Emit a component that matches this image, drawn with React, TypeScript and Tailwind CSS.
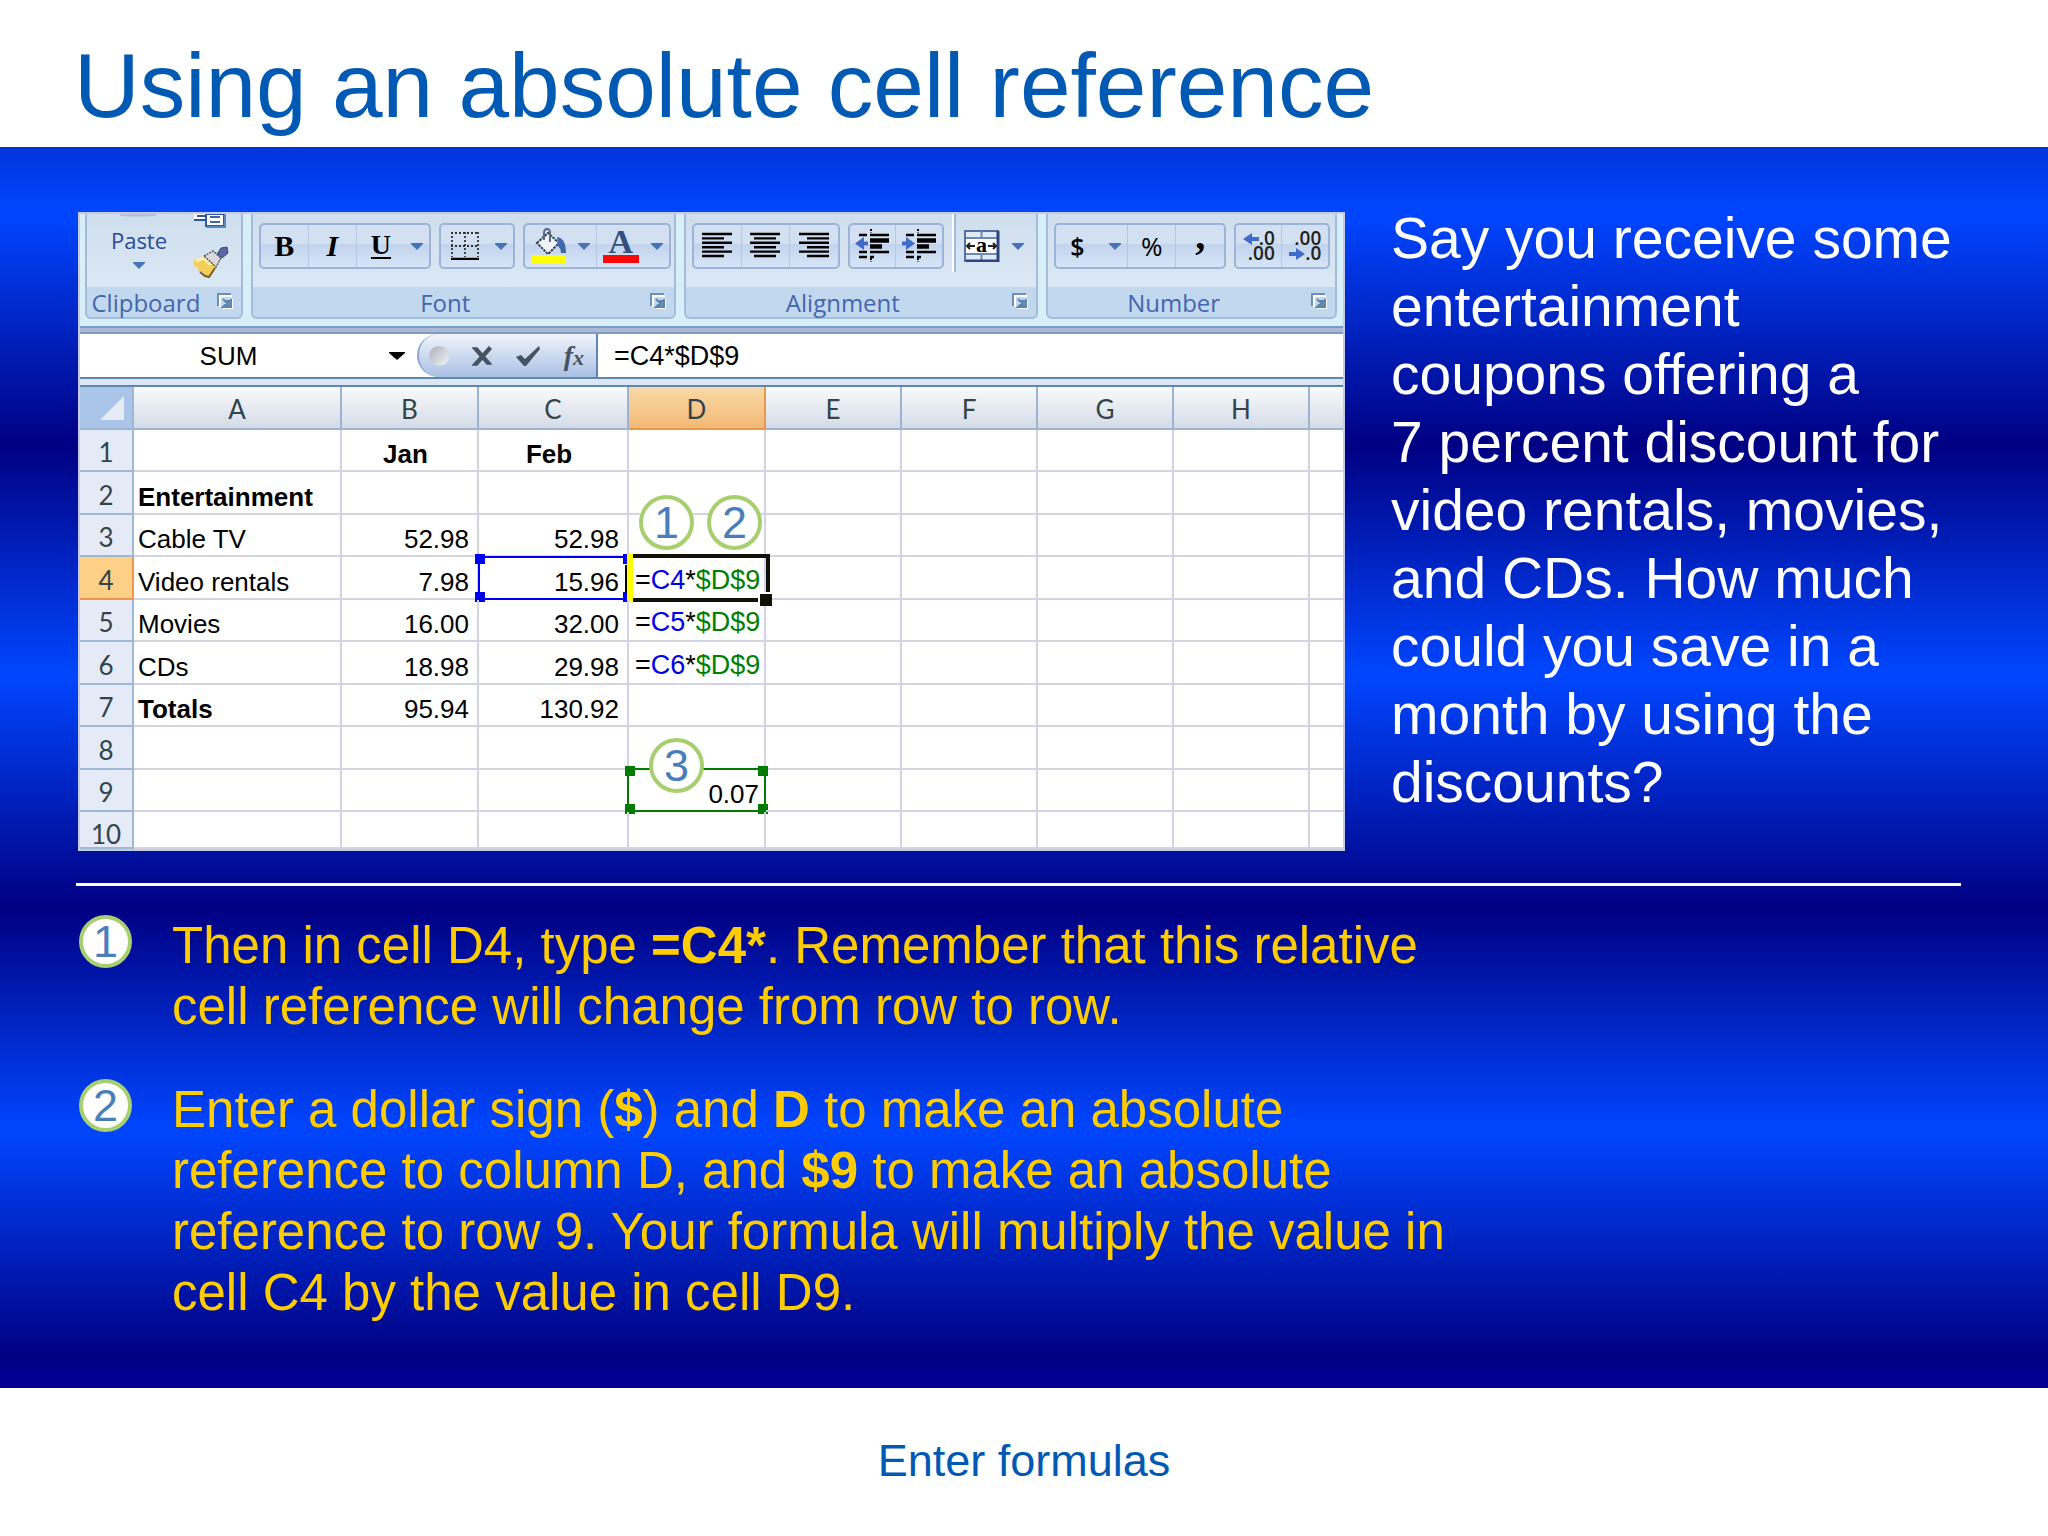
import type { ReactNode } from 'react';
import clsx from 'clsx';

const columns = ['A', 'B', 'C', 'D', 'E', 'F', 'G', 'H'];

const rows = [
  { id: 1, b: 'Jan', c: 'Feb', heading: true },
  { id: 2, a: 'Entertainment', boldLabel: true },
  { id: 3, a: 'Cable TV', b: '52.98', c: '52.98' },
  { id: 4, a: 'Video rentals', b: '7.98', c: '15.96', formula: 'C4' },
  { id: 5, a: 'Movies', b: '16.00', c: '32.00', formula: 'C5' },
  { id: 6, a: 'CDs', b: '18.98', c: '29.98', formula: 'C6' },
  { id: 7, a: 'Totals', b: '95.94', c: '130.92', boldLabel: true },
  { id: 8 },
  { id: 9, d: '0.07' },
  { id: 10 }
];

function Badge({ n, className }: { n: number; className?: string }) {
  return (
    <span
      className={clsx(
        'flex items-center justify-center rounded-full border-4 border-[#a8cf6f] bg-white font-normal text-[#4a7ebb] text-[45px] leading-none',
        className
      )}
    >
      {n}
    </span>
  );
}

function Caret() {
  return (
    <svg className="w-3 h-[7px] shrink-0" viewBox="0 0 12 7">
      <path d="M0 0h12v1L6 7 0 1z" fill="#4674b4" />
    </svg>
  );
}

function Launcher() {
  return (
    <button aria-label="More options" className="absolute right-2 top-[6px]">
      <svg className="w-4 h-4" viewBox="0 0 16 16">
        <path d="M1 13V1h13" fill="none" stroke="#6b8fb8" strokeWidth="2" />
        <path d="M3 14V3h12" fill="none" stroke="#fff" strokeWidth="2" />
        <path d="M15 6v10H6" fill="none" stroke="#fff" strokeWidth="2" />
        <path d="M6 6l4 4M14 6v8H6l2-2h2V8h4z" fill="#6b8fb8" stroke="#5d83af" strokeWidth="2" />
      </svg>
    </button>
  );
}

function Group({ title, children }: { title: string; children: ReactNode }) {
  return (
    <div className="flex flex-col rounded-b-md border-2 border-t-0 border-[#a3bcdb] bg-[#c2d8ef]">
      <div className="flex h-[73px] items-start gap-2 pl-[6px] pt-[9px] bg-gradient-to-b from-[#cfdeee] to-[#dbe8f5]">{children}</div>
      <div className="relative flex h-[30px] items-center justify-center pr-9 pt-[2px] text-[24px] leading-7 text-[#4466ad]">
        {title}
        <Launcher />
      </div>
    </div>
  );
}

function ButtonSet({ children }: { children: ReactNode }) {
  return (
    <div className="flex h-[46px] shrink-0 divide-x divide-[#b4c8e6] rounded-[5px] border-2 border-[#9db4d8] bg-gradient-to-b from-[#d3e0f2] from-45% via-[#c2d3ec] via-46% to-[#d6e5f7]">
      {children}
    </div>
  );
}

function Tool({ label, size = 'md', children }: { label: string; size?: 'sm' | 'md' | 'wide'; children: ReactNode }) {
  return (
    <button
      aria-label={label}
      className={clsx(
        'flex items-center text-black leading-none',
        size === 'sm' && 'w-[46px] justify-center',
        size === 'md' && 'w-12 justify-center',
        size === 'wide' && 'w-[72px] justify-between px-[6px]'
      )}
    >
      {children}
      {size === 'wide' && <Caret />}
    </button>
  );
}

function AlignIcon({ d }: { d: string }) {
  return (
    <svg className="w-8 h-7" viewBox="0 0 32 28">
      <path d={d} stroke="#000" strokeWidth="2.4" />
    </svg>
  );
}

function IndentIcon({ flip }: { flip?: boolean }) {
  return (
    <svg className="w-9 h-9" viewBox="0 0 36 36">
      <path d="M17 1v4M17 30v4" stroke="#000" strokeWidth="2" strokeDasharray="2 1.5" />
      <path d="M5 7h8M16 7h19M5 24h8M16 24h19M5 29h8M16 29h4" stroke="#000" strokeWidth="2.4" />
      <path d="M16 12.5h19M16 18.5h12" stroke="#000" strokeWidth="4.4" />
      {flip ? (
        <path d="M1 13.5h4V9l9 6.5L5 22v-4.500H1z" fill="#3f6bcb" />
      ) : (
        <path d="M14 13.500H10V9l-9 6.500L10 22v-4.500h4z" fill="#3f6bcb" />
      )}
    </svg>
  );
}

function Ribbon() {
  return (
    <div className="grid grid-cols-[158fr_425fr_355fr_291fr] gap-2 bg-[#d8eef8] pl-[5px] pr-[6px] pb-[7px] font-['Open_Sans',sans-serif]">
      <Group title="Clipboard">
        <button className="-mt-[9px] flex w-[92px] flex-col items-center text-[22px] leading-[28px] text-[#2c4a96]">
          <svg className="w-10 h-3" viewBox="0 0 40 12">
            <path d="M1 0h36v2q-18 1-36 0z" fill="#b9bfd9" />
          </svg>
          <span className="pb-2">Paste</span>
          <Caret />
        </button>
        <div className="-mt-[9px] flex flex-col items-center gap-[18px]">
          <button aria-label="Copy">
            <svg className="w-9 h-[14px]" viewBox="0 0 36 14">
              <path d="M1 0h16v6H1z" fill="#fff" />
              <path d="M1 6h16M4 2h10" stroke="#2f579b" strokeWidth="2" />
              <path d="M13 0h18v12H13z" fill="#fff" stroke="#2f579b" strokeWidth="2" />
              <path d="M32 0v13H13" fill="none" stroke="#5c86c2" strokeWidth="2" />
              <path d="M17 3h10M17 8h10" stroke="#3b66a8" strokeWidth="2" />
            </svg>
          </button>
          <button aria-label="Format Painter">
            <svg className="w-9 h-8" viewBox="0 0 36 32">
              <path d="M1 14L11 10l12 11-7 10-5-2-1-3-4 0-1-4-4-2z" fill="#f2cf5b" />
              <path d="M3 15L11 12l7 7" fill="none" stroke="#fdf0b0" strokeWidth="3" />
              <path d="M7 26l5 4 4 1 6-9" fill="none" stroke="#7b5c26" strokeWidth="2" />
              <path d="M11 10l9-5 8 7-5 9z" fill="#d9dadd" stroke="#555860" strokeWidth="1.500" strokeDasharray="2 1" />
              <path d="M24 8l4-6 6-1 1 6-6 5z" fill="#5b67a4" stroke="#3e4677" />
            </svg>
          </button>
        </div>
      </Group>

      <Group title="Font">
        <ButtonSet>
          <Tool label="Bold">
            <span className="font-['Liberation_Serif',serif] text-[30px] font-bold">B</span>
          </Tool>
          <Tool label="Italic">
            <span className="font-['Liberation_Serif',serif] text-[30px] font-bold italic">I</span>
          </Tool>
          <Tool label="Underline" size="wide">
            <span className="ml-2 border-b-2 border-black font-['Liberation_Serif',serif] text-[28px] font-bold leading-6">U</span>
          </Tool>
        </ButtonSet>
        <ButtonSet>
          <Tool label="Borders" size="wide">
            <svg className="ml-1 w-7 h-7" viewBox="0 0 28 28">
              <path d="M0 1h28M0 14h28M1 0v25M14 0v25M27 0v25" stroke="#333" strokeWidth="1.800" strokeDasharray="2 2" />
              <path d="M0 27h28" stroke="#000" strokeWidth="2.500" />
            </svg>
          </Tool>
        </ButtonSet>
        <ButtonSet>
          <Tool label="Fill Color" size="wide">
            <svg className="w-9 h-9" viewBox="0 0 36 36">
              <path d="M6 15L17 5l11 10-11 11z" fill="#eef3fb" stroke="#333a48" strokeWidth="2" strokeDasharray="2.500 1" />
              <path d="M13 12V5q0-4 3-4t3 4v9" fill="none" stroke="#5b6b88" strokeWidth="2" />
              <path d="M26 9q9 1 9 16l-5 0q0-6-5-8l2-2z" fill="#4069ad" />
              <path d="M0 27h35v8H0z" fill="#ff0" />
            </svg>
          </Tool>
          <Tool label="Font Color" size="wide">
            <span className="flex w-9 flex-col items-center">
              <span className="font-['Liberation_Serif',serif] text-[34px] font-bold leading-[26px] text-[#34507f]">A</span>
              <span className="h-2 w-full bg-[#f80a0a]" />
            </span>
          </Tool>
        </ButtonSet>
      </Group>

      <Group title="Alignment">
        <ButtonSet>
          <Tool label="Align Left">
            <AlignIcon d="M1 2h30M1 6.400h22M1 10.800h30M1 15.200h22M1 19.600h30M1 24h22" />
          </Tool>
          <Tool label="Center">
            <AlignIcon d="M1 2h30M5 6.400h22M1 10.800h30M5 15.200h22M1 19.600h30M5 24h22" />
          </Tool>
          <Tool label="Align Right">
            <AlignIcon d="M1 2h30M9 6.400h22M1 10.800h30M9 15.200h22M1 19.600h30M9 24h22" />
          </Tool>
        </ButtonSet>
        <ButtonSet>
          <Tool label="Decrease Indent" size="sm">
            <IndentIcon />
          </Tool>
          <Tool label="Increase Indent" size="sm">
            <IndentIcon flip />
          </Tool>
        </ButtonSet>
        <div className="-mt-[9px] h-[58px] border-l-2 border-white border-r-2 border-r-[#9fb9da]" />
        <button aria-label="Merge and Center" className="flex h-[46px] items-center gap-3">
          <svg className="w-9 h-8" viewBox="0 0 36 32">
            <path d="M1 1h33v30H1z" fill="#dfeafa" stroke="#54709e" strokeWidth="2" />
            <path d="M2 8h31M2 24h31M17.500 1v7M17.500 24v7" stroke="#6d89b8" strokeWidth="2" />
            <path d="M2 9h31v14H2z" fill="#fff" />
            <path d="M34 1v30H2" fill="none" stroke="#2c4480" strokeWidth="3" />
            <path d="M3 16h8M24 16h8M6 13l-3 3 3 3M29 13l3 3-3 3" fill="none" stroke="#222" strokeWidth="2" />
            <text x="17.500" y="22" textAnchor="middle" fontSize="22" fontWeight="700" fontFamily="Liberation Serif">
              a
            </text>
          </svg>
          <Caret />
        </button>
      </Group>

      <Group title="Number">
        <ButtonSet>
          <Tool label="Currency" size="wide">
            <span className="ml-2 text-[25px] font-semibold">$</span>
          </Tool>
          <Tool label="Percent">
            <span className="text-[26px]">%</span>
          </Tool>
          <Tool label="Comma">
            <span className="-mt-5 font-['Liberation_Serif',serif] text-[40px] font-bold leading-[46px]">,</span>
          </Tool>
        </ButtonSet>
        <ButtonSet>
          <Tool label="Increase Decimal" size="sm">
            <span className="flex flex-col items-end text-[19px] font-semibold leading-[15px] text-[#222]">
              <span className="flex items-center">
                <svg className="w-4 h-3" viewBox="0 0 16 12">
                  <path d="M0 6l9-6v4h7v4H9v4z" fill="#3f6bcb" />
                </svg>
                .0
              </span>
              <span>.00</span>
            </span>
          </Tool>
          <Tool label="Decrease Decimal" size="sm">
            <span className="flex flex-col items-end text-[19px] font-semibold leading-[15px] text-[#222]">
              <span>.00</span>
              <span className="flex items-center">
                <svg className="w-4 h-3" viewBox="0 0 16 12">
                  <path d="M16 6L7 0v4H0v4h7v4z" fill="#3f6bcb" />
                </svg>
                .0
              </span>
            </span>
          </Tool>
        </ButtonSet>
      </Group>
    </div>
  );
}

function FormulaBar() {
  return (
    <div className="flex h-[43px] bg-white text-black">
      <input aria-label="Name box" defaultValue="SUM" className="w-[297px] pt-[2px] text-center text-[26px] outline-none" />
      <button aria-label="Open name list" className="flex w-[40px] items-center justify-center">
        <svg className="w-4 h-2" viewBox="0 0 16 8">
          <path d="M0 0h16v1L8 8 0 1z" />
        </svg>
      </button>
      <div className="flex w-[181px] items-center justify-between rounded-l-full border-l-2 border-r-2 border-[#8fa6cf] border-r-[#5f86ad] bg-gradient-to-b from-[#f1f5fb] to-[#a9c0e3] pl-[10px] pr-3">
        <span className="h-5 w-5 rounded-full bg-gradient-to-br from-[#a9afb9] to-[#f4f6fa]" />
        <button aria-label="Cancel">
          <svg className="w-5 h-5" viewBox="0 0 20 20">
            <path d="M1 2h4l14 16h-4zM17 1l2 2L5 19H1z" fill="#475364" stroke="#475364" strokeWidth="1.500" />
          </svg>
        </button>
        <button aria-label="Enter">
          <svg className="w-[26px] h-[22px]" viewBox="0 0 26 22">
            <path d="M1 12l5-2 4 4L24 1l1 3-14 17H9z" fill="#475364" />
          </svg>
        </button>
        <button
          aria-label="Insert function"
          className="font-['Liberation_Serif',serif] text-[28px] font-bold italic leading-none text-[#475364]"
        >
          f<span className="text-[22px]">x</span>
        </button>
      </div>
      <input aria-label="Formula" defaultValue="=C4*$D$9" className="min-w-0 flex-1 pl-4 pt-[2px] text-[27px] outline-none" />
    </div>
  );
}

function Formula({ cell }: { cell: string }) {
  return (
    <>
      =<span className="text-[#0000e6]">{cell}</span>*<span className="text-[#008000]">$D$9</span>
    </>
  );
}

function Sheet() {
  const cell = 'relative border-r-2 border-b-2 border-[#d3d3e4] whitespace-nowrap';
  return (
    <table className="w-full table-fixed border-separate border-spacing-0 bg-white text-[26px] leading-[26px] text-black">
      <colgroup>
        <col className="w-[54px]" />
        <col className="w-[208px]" />
        <col className="w-[137px]" />
        <col className="w-[150px]" />
        <col className="w-[137px]" />
        <col className="w-[136px]" />
        <col className="w-[136px]" />
        <col className="w-[136px]" />
        <col className="w-[136px]" />
        <col />
      </colgroup>
      <thead className="font-['Lato',sans-serif] text-[#33454a]">
        <tr className="h-[43px]">
          <th className="border-r-2 border-b-2 border-[#9db8d6] bg-[#abc5e8] p-0">
            <svg className="ml-auto mr-2 w-6 h-6" viewBox="0 0 24 24">
              <path d="M24 0v24H0z" fill="#e4ecf6" />
            </svg>
          </th>
          {columns.map((name) => (
            <th
              key={name}
              className={clsx(
                'border-r-2 border-b-2 p-0 pt-[2px] font-normal bg-gradient-to-b',
                name === 'D' ? 'border-[#e9984a] from-[#f9d9a6] to-[#f3b975]' : 'border-[#9db4cf] from-[#f8fafc] to-[#d5dce8]'
              )}
            >
              {name}
            </th>
          ))}
          <th className="border-b-2 border-[#9db4cf] bg-gradient-to-b from-[#f8fafc] to-[#d5dce8]" />
        </tr>
      </thead>
      <tbody>
        {rows.map((row) => (
          <tr key={row.id} className={row.id === 10 ? 'h-[37px]' : 'h-[42px] even:h-[43px]'}>
            <th
              className={clsx(
                "border-r-2 border-b-2 p-0 font-['Lato',sans-serif] font-normal text-[#33454a]",
                row.id === 10 ? 'pt-2' : 'pt-1',
                row.id === 4 ? 'border-[#f0954a] bg-[#fdd088]' : 'border-[#9fb9d4] bg-[#e4eaf6]'
              )}
            >
              {row.id}
            </th>
            <td className={clsx(cell, 'pt-2 pl-1', row.boldLabel && 'font-bold')}>{row.a}</td>
            <td className={clsx(cell, 'pt-2 pr-2', row.heading ? 'text-center font-bold' : 'text-right')}>{row.b}</td>
            <td className={clsx(cell, 'pt-2 pr-2', row.heading ? 'text-center font-bold' : 'text-right')}>
              {row.c}
              {row.id === 4 && (
                <>
                  <span className="absolute -top-px -left-px -bottom-[2px] right-0 border-2 border-r-0 border-[#0000f0]" />
                  <span className="absolute -top-[3px] -left-1 h-[10px] w-[10px] bg-[#0000f0]" />
                  <span className="absolute -bottom-1 -left-1 h-[10px] w-[10px] bg-[#0000f0]" />
                  <span className="absolute -top-[3px] right-0 h-[10px] w-1 bg-[#0000f0]" />
                  <span className="absolute -bottom-1 right-0 h-[10px] w-1 bg-[#0000f0]" />
                  <span className="absolute top-2 right-0 h-7 w-[2px] bg-black" />
                </>
              )}
            </td>
            <td className={clsx(cell, row.formula ? 'pl-[6px] pt-1 text-[27px]' : 'pt-2 pr-[5px] text-right')}>
              {row.formula ? <Formula cell={row.formula} /> : row.d}
              {row.id === 3 && (
                <>
                  <Badge n={1} className="absolute left-[10px] -top-5 z-10 h-[55px] w-[55px]" />
                  <Badge n={2} className="absolute left-[78px] -top-5 z-10 h-[55px] w-[55px]" />
                </>
              )}
              {row.id === 4 && (
                <>
                  <span className="absolute -top-[3px] left-1 -right-[6px] -bottom-1 border-4 border-l-0 border-[#12120a]" />
                  <span className="absolute -top-[3px] -left-[2px] -bottom-1 w-[6px] bg-[#ffff00]" />
                  <span className="absolute -right-2 -bottom-2 z-10 h-[14px] w-[14px] border-t-2 border-l-2 border-white bg-[#12120a]" />
                </>
              )}
              {row.id === 9 && (
                <>
                  <span className="absolute -top-[2px] -left-[2px] -right-[2px] -bottom-[2px] border-2 border-[#007a00]" />
                  <span className="absolute -top-1 -left-1 h-[10px] w-[10px] bg-[#007a00]" />
                  <span className="absolute -top-1 -right-1 h-[10px] w-[10px] bg-[#007a00]" />
                  <span className="absolute -bottom-1 -left-1 h-[10px] w-[10px] bg-[#007a00]" />
                  <span className="absolute -bottom-1 -right-1 h-[10px] w-[10px] bg-[#007a00]" />
                  <Badge n={3} className="absolute left-5 -top-8 z-10 h-[55px] w-[55px]" />
                </>
              )}
            </td>
            <td className={cell} />
            <td className={cell} />
            <td className={cell} />
            <td className={cell} />
            <td className="border-b-2 border-[#d3d3e4] p-0" />
          </tr>
        ))}
      </tbody>
    </table>
  );
}

export default function App() {
  return (
    <div className="flex min-h-screen flex-col bg-white font-['Liberation_Sans',Arial,sans-serif]">
      <header className="flex h-[147px] items-end pb-[9px] pl-[74px]">
        <h1 className="text-[91px] leading-[105px] text-[#0059b3]">Using an absolute cell reference</h1>
      </header>

      <main className="flex-1 bg-[linear-gradient(to_bottom,#0034dc_0%,#0046ff_5.4%,#000082_24%,#0046ff_42.500%,#000082_61.300%,#0046ff_79.200%,#000082_97.500%,#00009a_100%)] pl-[76px] pr-[87px] pt-[57px]">
        <div className="flex items-start gap-[46px]">
          <figure className="mt-2 ml-[2px] min-w-0 flex-1 border-2 border-[#c5cbe6]">
            <Ribbon />
            <div className="h-2 border-y-2 border-[#7d9cc0] bg-[#a9bad8]" />
            <FormulaBar />
            <div className="h-[10px] border-y-2 border-[#5f86ad] bg-[#dce6f4]" />
            <Sheet />
          </figure>
          <p className="w-[570px] text-[57px] leading-[68px] text-white">
            Say you receive some entertainment coupons offering a 7{'\u00a0'}percent discount for video rentals, movies, and
            CDs. How much could you save in a month by using the discounts?
          </p>
        </div>

        <hr className="mt-8 border-t-[3px] border-white" />

        <ol className="mt-7 flex max-w-[1400px] flex-col gap-[42px] pt-px text-[51px] leading-[61px] text-[#ffcc00]">
          <li className="flex items-start gap-10 pl-[3px]">
            <Badge n={1} className="h-[53px] w-[53px] shrink-0" />
            <p>
              Then in cell D4, type <b>=C4*</b>. Remember that this relative cell reference will change from row to row.
            </p>
          </li>
          <li className="flex items-start gap-10 pl-[3px]">
            <Badge n={2} className="h-[53px] w-[53px] shrink-0" />
            <p>
              Enter a dollar sign (<b>$</b>) and <b>D</b> to make an absolute reference to column D, and <b>$9</b> to make an
              absolute reference to row 9. Your formula will multiply the value in cell C4 by the value in cell D9.
            </p>
          </li>
        </ol>
      </main>

      <footer className="flex h-[148px] items-center justify-center pb-[2px] text-[45px] text-[#0059b3]">Enter formulas</footer>
    </div>
  );
}
